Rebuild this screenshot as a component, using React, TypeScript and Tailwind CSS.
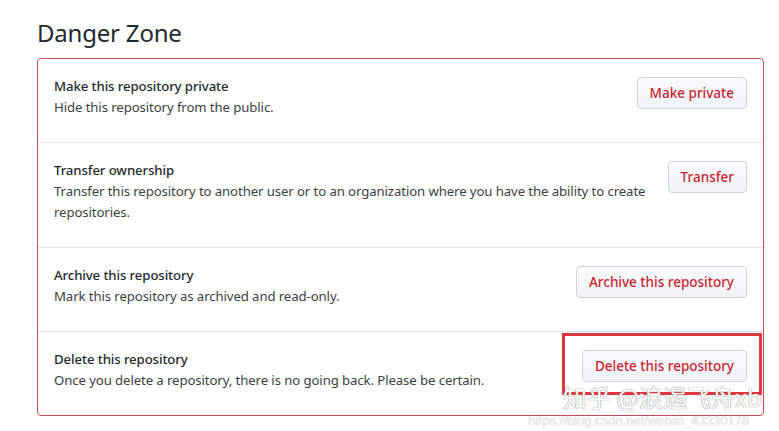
export default function App() {
  const rows = [
    {
      title: "Make this repository private",
      desc: "Hide this repository from the public.",
      button: "Make private",
    },
    {
      title: "Transfer ownership",
      desc: "Transfer this repository to another user or to an organization where you have the ability to create repositories.",
      button: "Transfer",
    },
    {
      title: "Archive this repository",
      desc: "Mark this repository as archived and read-only.",
      button: "Archive this repository",
    },
    {
      title: "Delete this repository",
      desc: "Once you delete a repository, there is no going back. Please be certain.",
      button: "Delete this repository",
      highlight: true,
    },
  ];

  return (
    <main className="relative min-h-screen w-[779px] bg-white pl-[37px] pr-[15px] pt-[18px] text-[#24292e] font-['Noto_Sans',sans-serif]">
      <h2 className="text-[24px] font-normal leading-[30px] tracking-[-0.2px] mb-[10px]">Danger Zone</h2>

      <div className="border border-[#cc4a52] rounded-[4px]">
        {rows.map((row, i) => (
          <div
            key={row.title}
            className={`relative flex items-start justify-between gap-2 px-4 pt-[17px] pb-[24px] ${i > 0 ? "border-t border-[#e1e4e8]" : ""}`}
          >
            <div className="text-[13.2px] leading-[21px] tracking-[-0.1px]">
              <div className="font-medium text-[#24292e]">{row.title}</div>
              <p className="text-[#3b3f44]">{row.desc}</p>
            </div>
            <button className="mt-px shrink-0 h-[32px] px-3 rounded-[4px] border border-[#d1d5da] bg-gradient-to-b from-[#fafbfc] to-[#eff3f6] text-[13.5px] font-medium text-[#cb2431] whitespace-nowrap">
              {row.button}
            </button>
            {row.highlight && (
              <div className="absolute right-[1px] top-[1px] w-[200px] h-[62px] border-[3px] border-[#e0373d] pointer-events-none" />
            )}
          </div>
        ))}
      </div>

      {/* watermark */}
      <div className="absolute left-[563px] top-[382px] text-[24px] leading-[30px] text-white font-['Noto_Sans_CJK_SC',sans-serif] [text-shadow:0_0_1px_#888,0_0_1px_#888]">
        知乎 @浪遏飞舟xb
      </div>
      <div className="absolute left-[528px] top-[413px] text-[13px] leading-[15px] text-white/80 font-['Liberation_Sans',sans-serif] [text-shadow:0_0_1px_#aaa]">
        https://blog.csdn.net/weixin_43330178
      </div>
    </main>
  );
}
